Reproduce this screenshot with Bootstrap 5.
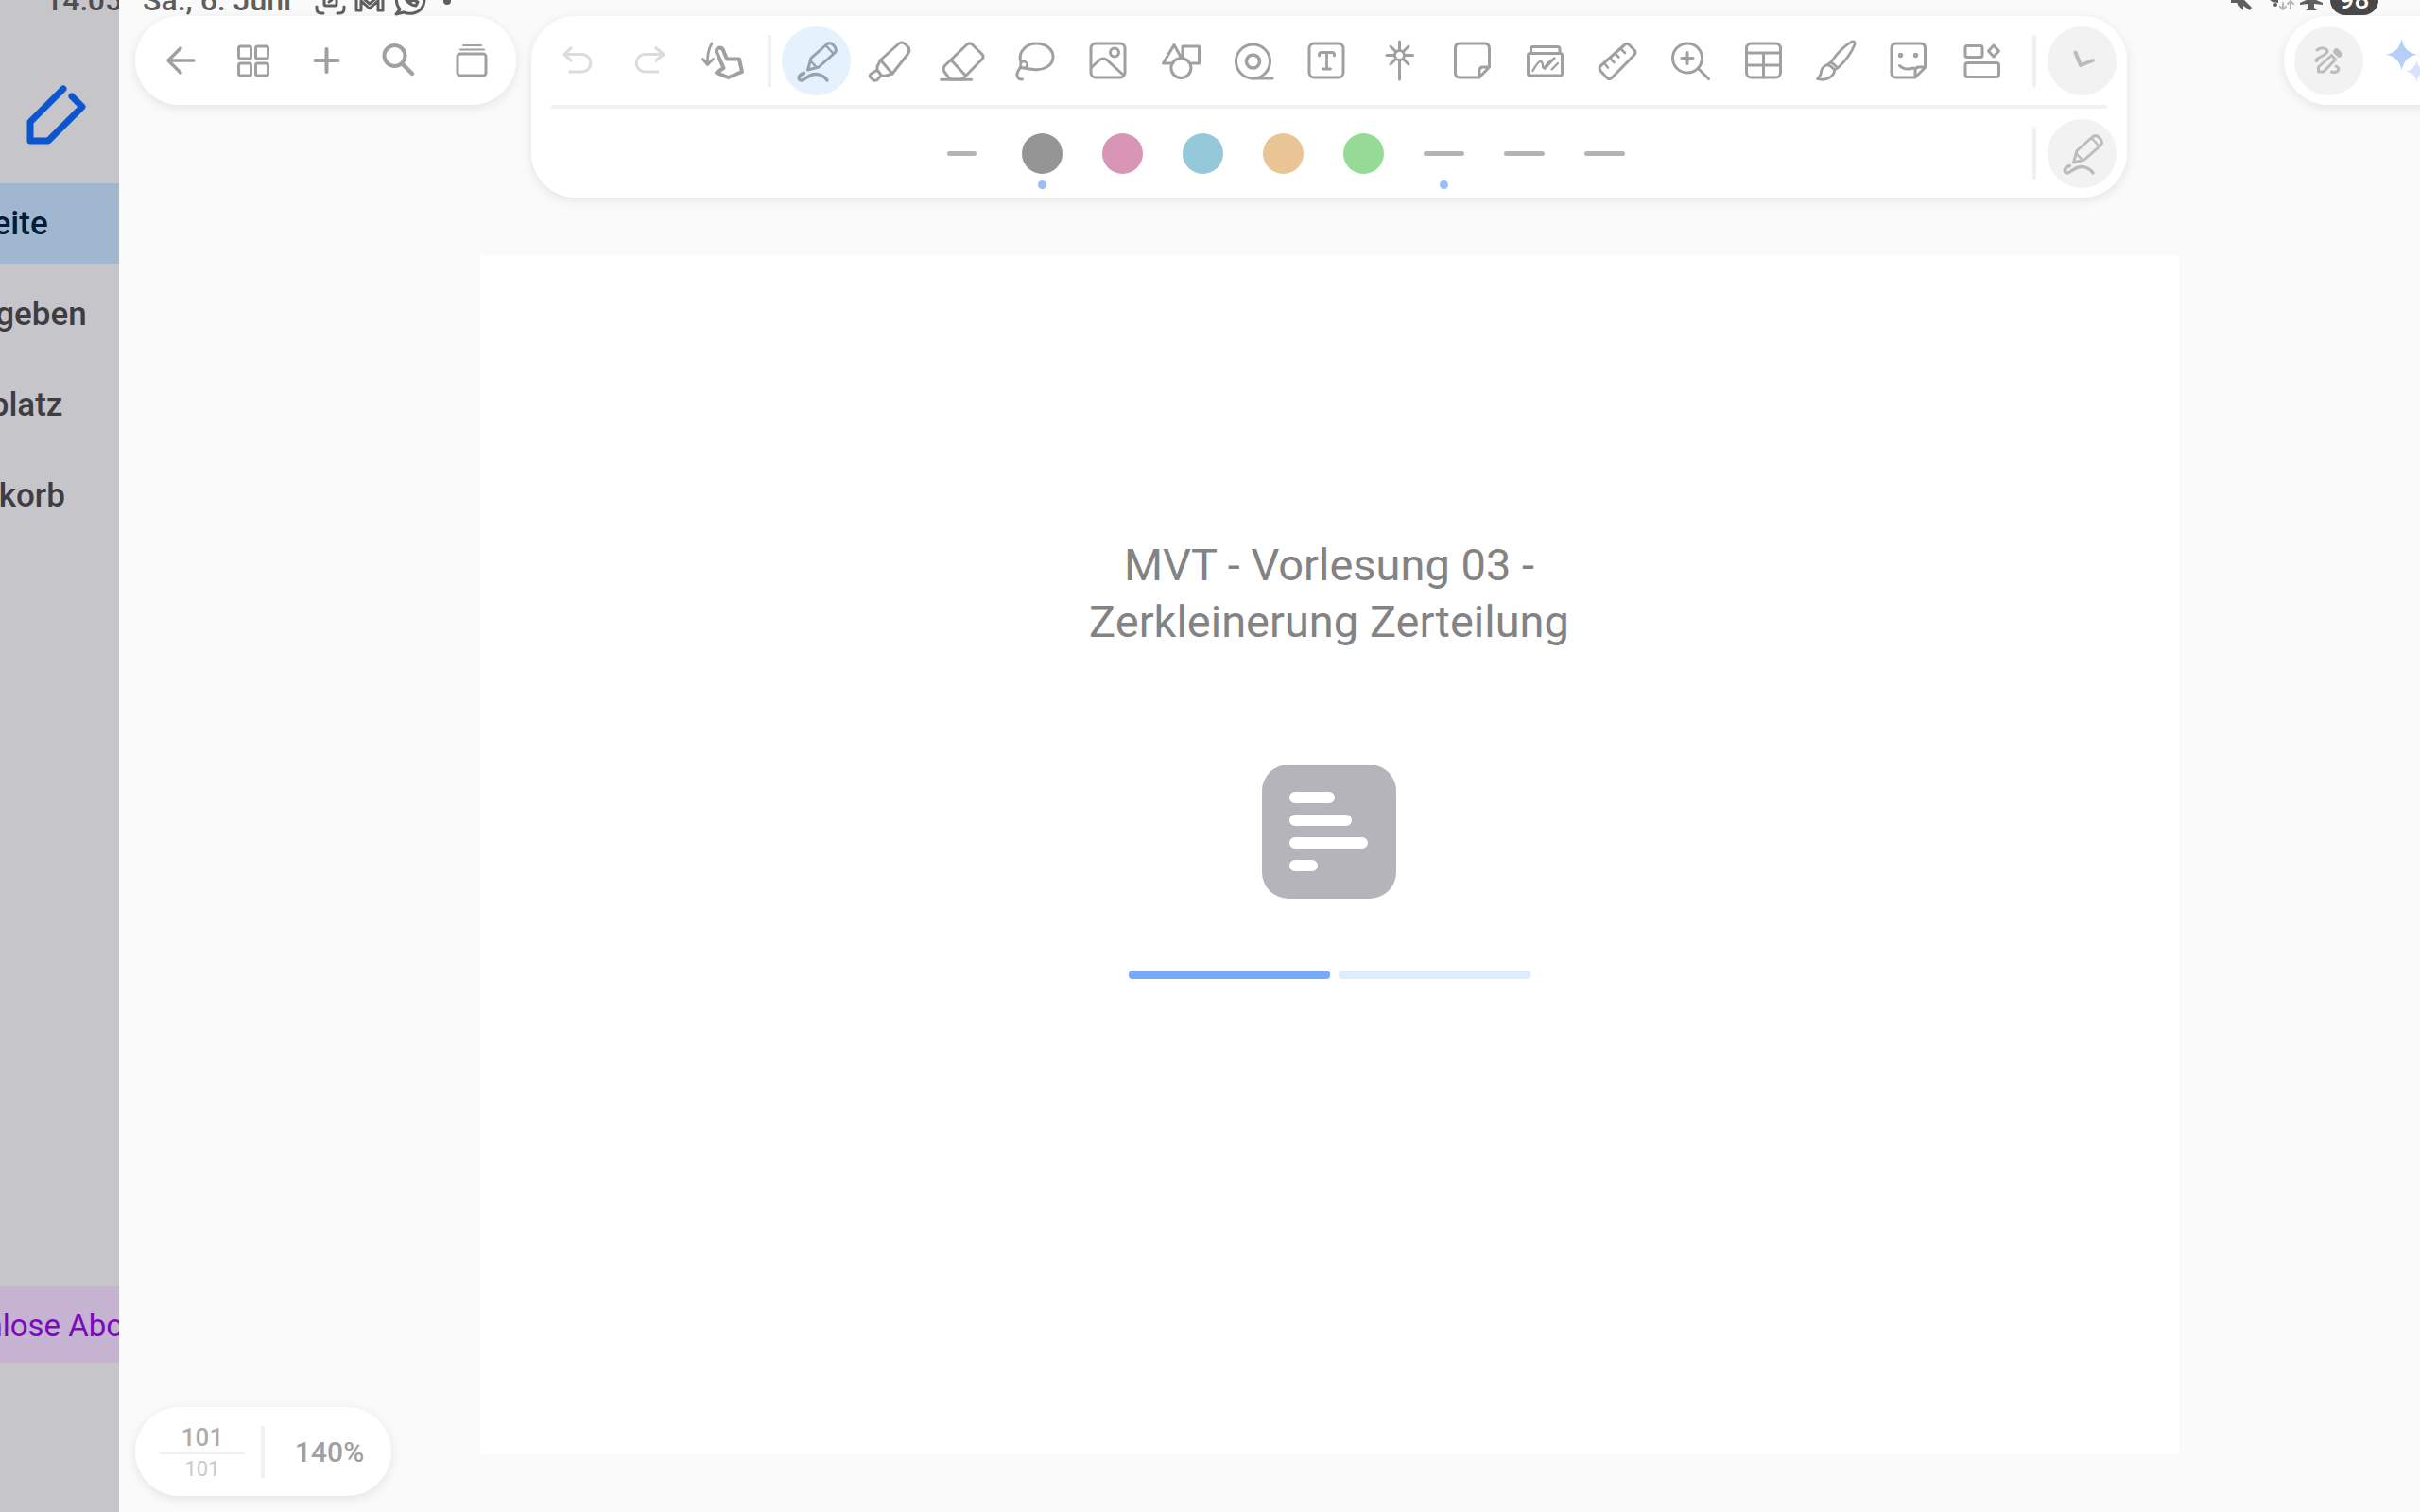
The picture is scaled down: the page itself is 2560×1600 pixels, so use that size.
<!DOCTYPE html>
<html lang="de">
<head>
<meta charset="utf-8">
<meta name="viewport" content="width=device-width, initial-scale=1">
<title>MVT - Vorlesung 03 - Zerkleinerung Zerteilung</title>
<link href="https://cdn.jsdelivr.net/npm/bootstrap@5.3.0/dist/css/bootstrap.min.css" rel="stylesheet">
<script src="https://cdn.jsdelivr.net/npm/bootstrap@5.3.0/dist/js/bootstrap.bundle.min.js" defer></script>
<style>
  body { font-family: Roboto, "Liberation Sans", sans-serif; background: #fafafa; color: #a0a0a0; }
  svg { fill: none; stroke: currentColor; stroke-width: 3; stroke-linecap: round; stroke-linejoin: round; flex: none; overflow: visible; }
  .ico { width: 48px; height: 48px; }

  /* status bar, half scrolled off the top edge */
  .status-strip { height: 32px; margin-top: -16px; line-height: 32px; font-size: 32px; font-weight: 500; color: #5f5f5f; z-index: 5; padding: 0 44px 0 48px; }
  .status-time { width: 78px; color: #4e4d52; margin-right: 25px; }
  .status-date { margin-right: 25px; }
  .battery { background: #484848; color: #fff; border-radius: 16px; width: 51px; font-size: 28px; }

  /* drawer, sliding out to the left */
  .drawer { width: 126px; background: #c5c5ca; flex: none; }
  .drawer-inner { width: 230px; margin-left: -104px; padding-top: 84px; }
  .drawer-logo { width: 76px; height: 76px; margin: 0 0 34px 126px; color: #0b55cf; stroke-width: 7; }
  .drawer-link { height: 85px; margin-bottom: 11px; font-size: 35px; font-weight: 500; color: #3e3d44; text-decoration: none; padding: 2px 0 0 2px; }
  .drawer-link.active { background: #a1b7cf; color: #031c38; }
  .drawer-offer { height: 81px; margin-bottom: 158px; background: #c5b3d1; color: #7a0bb8; font-size: 33px; text-decoration: none; padding: 2px 0 0 4px; }

  /* editor */
  .editor { flex: none; padding: 17px 17px 0; }
  .side-cell { flex: 1 1 0; }
  .float-panel { background: #fff; box-shadow: 0 3px 12px rgba(0, 0, 0, .09); border-radius: 47px; }
  .pill { height: 94px; }
  .nav-pill { padding: 0 9px; }
  .tool { width: 77px; height: 94px; border: 0; background: none; padding: 0; color: #a0a0a0; }
  .tool:disabled { color: #dcdcdc; }
  .disc { width: 73px; height: 73px; border-radius: 50%; display: flex; align-items: center; justify-content: center; }
  .tool .disc { background: #e5f1fd; color: #94a2b1; margin: 0 2px; }
  .round-btn { border: 0; padding: 0; background: #f2f2f2; color: #bcbcbc; flex: none; }
  .vbar { width: 4px; height: 55px; background: #f1f1f1; flex: none; }
  .tool-split { margin: 0 9px; }
  .tool-row { height: 94px; padding: 0 11px 0 10px; }
  .row-split { height: 4px; margin: 0 21px; background: #f2f2f2; }
  .swatch-btn { width: 85px; height: 94px; border: 0; background: none; padding: 0; }
  .swatch { width: 43px; height: 43px; border-radius: 50%; }
  .stroke-line { width: 43px; height: 5px; border-radius: 3px; background: #b3b4b6; }
  .stroke-line.short { width: 31px; }
  .picked::after { content: ""; position: absolute; left: 38px; top: 76px; width: 9px; height: 9px; border-radius: 50%; background: #98bef8; }
  .ai-pill { width: 253px; padding-left: 11px; }

  .sheet { width: 1797px; max-width: 72%; margin: 61px auto; padding-top: 298px; background: #fff; }
  .sheet-title { font-size: 47px; line-height: 60px; color: #838383; width: 520px; font-weight: 400; margin-bottom: 121px; }
  .doc-icon { width: 142px; height: 142px; margin-bottom: 76px; }
  .load-bar { width: 425px; gap: 9px; }
  .load-bar div { height: 9px; border-radius: 4px; }
  .load-done { background: #76a9f9; width: 213px; }
  .load-rest { background: #deedfd; }

  .page-pill { left: 17px; bottom: 17px; padding: 0 29px 0 26px; }
  .page-count { width: 90px; margin-right: 17px; line-height: 24px; padding-top: 3px; }
  .page-now { font-size: 26px; font-weight: 500; color: #acacac; padding-bottom: 4px; border-bottom: 2px solid #efefef; }
  .page-all { font-size: 22px; color: #c9c9c9; padding-top: 4px; }
  .zoom-value { font-size: 30px; font-weight: 500; margin-left: 32px; color: #a0a0a0; }
</style>
</head>
<body class="vh-100 overflow-hidden position-relative">

<svg class="d-none" aria-hidden="true">
  <symbol id="i-back" viewBox="0 0 48 48"><path stroke-width="3.5" d="M38 24H11M24 11L11 24L24 37"/></symbol>
  <symbol id="i-grid" viewBox="0 0 48 48"><rect x="8.500" y="9" width="13" height="13" rx="2"/><rect x="26.500" y="9" width="13" height="13" rx="2"/><rect x="8.500" y="27" width="13" height="13" rx="2"/><rect x="26.500" y="27" width="13" height="13" rx="2"/></symbol>
  <symbol id="i-plus" viewBox="0 0 48 48"><path stroke-width="4" d="M24.500 12V36M12.500 24H36.500"/></symbol>
  <symbol id="i-search" viewBox="0 0 48 48"><circle cx="19.500" cy="19" r="11" stroke-width="4"/><path stroke-width="4.500" d="M29 29L38 38"/></symbol>
  <symbol id="i-stack" viewBox="0 0 48 48"><rect x="9" y="17" width="30" height="23" rx="3"/><path stroke-width="2" d="M12 12.500H37M15 8H34"/></symbol>
  <symbol id="i-undo" viewBox="0 0 48 48"><path d="M18 10L10 17.500L18 25M10 17.500H28.500A9.200 9.200 0 0 1 28.500 36H14.500" stroke-linecap="butt"/></symbol>
  <symbol id="i-redo" viewBox="0 0 48 48"><path d="M29 10L38 17.500L29 25M38 17.500H18.500A9.200 9.200 0 0 0 18.500 36H33" stroke-linecap="butt"/></symbol>
  <symbol id="i-hand" viewBox="0 0 48 48"><path d="M12 6Q7 14 7.500 28M2.500 22.500L7.500 28.500L13.500 22.500" stroke-width="2.800"/><path stroke-width="4" d="M17 15C16.500 10 22 9 24 13L28 22.500L41 22.500L44 36L29.500 42L17 37L24.500 32Z"/></symbol>
  <symbol id="i-pen" viewBox="0 0 48 48"><path d="M14.500 34L18 21.500L35 6.500Q38 4.500 41 7L43.500 10Q45.500 13 43 16L26 31Z"/><path d="M34 8.500L41 16M17.500 24.500L23.500 31" stroke-width="2.500"/><path stroke-width="3.500" d="M10.500 37.500C5 39 3 45 8 45C13 44 18 35.500 28 39.500Q33 41.500 35 45"/></symbol>
  <symbol id="i-marker" viewBox="0 0 48 48"><path d="M14.500 23.500L34 6Q37.500 3.500 41 7L44 10Q46 13.500 43.500 17L27 38Z"/><path d="M14.500 23.500L11 30.500V34L4 38.500Q2.500 40 4 42L6.500 44.500Q8.500 46 11 44.500L15 40L19 40.500L27 38M11 34L15.500 40"/></symbol>
  <symbol id="i-eraser" viewBox="0 0 48 48"><path d="M5.500 29.500L29 7Q32 4.500 35 7.500L45 17.500Q47 20 45 22.500L26 42Q24 44 21 44H13.500Q11 44 9.500 42L5 36Q3 32.500 5.500 29.500ZM12.500 24L27 39.500"/><path d="M1.500 44.300H33.500"/></symbol>
  <symbol id="i-lasso" viewBox="0 0 48 48"><path d="M9 26C5 14 16 6 25.500 6C35 6 43 12 43 20C43 30 32 35 22 33.500L8 31.500"/><circle cx="12" cy="28.500" r="3.500" stroke-width="2.500"/><path d="M9 31Q2 39 7 43.500L10.500 44"/></symbol>
  <symbol id="i-image" viewBox="0 0 48 48"><rect x="6" y="6" width="36" height="36" rx="5"/><circle cx="31" cy="15.500" r="4.500"/><path d="M6.500 31.500L15 23.500Q19 20.500 23 23.500L40.500 39.500"/></symbol>
  <symbol id="i-shapes" viewBox="0 0 48 48"><path d="M16 27H5.500L17 7.500L24 20M26 21V9H43.500V27H36"/><circle cx="24.400" cy="32" r="10.500"/></symbol>
  <symbol id="i-tape" viewBox="0 0 48 48"><circle cx="23.500" cy="25" r="18"/><circle cx="23.500" cy="25" r="7" stroke-width="3.500"/><path d="M23.500 43H44"/></symbol>
  <symbol id="i-text" viewBox="0 0 48 48"><rect x="6" y="6" width="36" height="36" rx="5"/><path stroke-width="2.800" d="M24.500 15.500V33M20.500 33H28.500M16.500 19V18Q16.500 15.500 19 15.500H30Q32.500 15.500 32.500 18V19"/></symbol>
  <symbol id="i-wand" viewBox="0 0 48 48"><circle cx="24.500" cy="18.500" r="5"/><path d="M24.500 4V12M24.500 24V44M11 18.500H19M30 18.500H38.500M15 9L20.500 14.500M34 9L28.500 14.500M15 28L20.500 22.500M34 28L28.500 22.500"/></symbol>
  <symbol id="i-note" viewBox="0 0 48 48"><path d="M11 6H37.500Q42.500 6 42.500 11V31L32 42H11Q6.500 42 6.500 37V11Q6.500 6 11 6ZM32 42V35Q32 31 36 31H42.500"/></symbol>
  <symbol id="i-photos" viewBox="0 0 48 48"><rect x="6.500" y="16.500" width="36" height="23.500" rx="2"/><path d="M9.500 16V12Q9.500 9.500 12 9.500H37.500Q40 9.500 40 12V16"/><path stroke-width="2.300" d="M11.500 35Q17 25 19.500 25T22 30T27 27L34.500 21.500M24 33L34.500 21.500M31.500 33.500L38 27"/></symbol>
  <symbol id="i-ruler" viewBox="0 0 48 48"><path d="M6.500 29.500L31.500 7.500Q34 5 36.500 7.500L42 13Q44 15.500 42 18L18 42.500Q15.500 45 13 42.500L6 35Q4 32 6.500 29.500Z"/><path stroke-width="2.600" d="M11 28L14 31.500M17 22.500L20.500 26M22.500 17.500L25.500 20.500M28 12L32 16"/></symbol>
  <symbol id="i-zoom" viewBox="0 0 48 48"><circle cx="21" cy="21.500" r="15.500"/><path d="M21 15.500V27.500M15 21.500H27M32.500 32.500L43.500 43.500"/></symbol>
  <symbol id="i-table" viewBox="0 0 48 48"><rect x="6.500" y="6" width="36" height="36" rx="5"/><path d="M6.500 16H42.500M6.500 29H42.500M24.500 16V42"/></symbol>
  <symbol id="i-brush" viewBox="0 0 48 48"><path d="M19.500 25Q30 10 41 4Q44.500 3 44 7Q39 20 26.500 31.500M19.500 25L15 28.500Q9 31 8.500 36Q8.500 40 4.500 43.500Q14 46 20 40Q23 37 22.500 34L26.500 31.500M18.500 26Q23 28 25.500 31.500M15 28.500Q20 30 22.500 34" stroke-width="2.800"/></symbol>
  <symbol id="i-sticker" viewBox="0 0 48 48"><path d="M10.500 6H36.500Q41.500 6 41.500 11V31.500L31 42H10.500Q6 42 6 37V11Q6 6 10.500 6ZM31 42V35Q31 31 35 31H41.500M14.500 29.500Q20 35 29 32"/><circle cx="15.500" cy="18.500" r="1.200"/><circle cx="31.500" cy="18.500" r="1.200"/></symbol>
  <symbol id="i-layout" viewBox="0 0 48 48"><rect x="7" y="8.500" width="18" height="12" rx="2"/><path d="M37 8L42.500 14L37 20L31.500 14Z"/><rect x="7" y="26.500" width="35.500" height="15" rx="2.500"/></symbol>
  <symbol id="i-angle" viewBox="0 0 48 48"><path stroke-width="4" d="M16.500 15.500L22 29L35 24"/></symbol>
  <symbol id="i-draw" viewBox="0 0 48 48"><path d="M11 13Q16 9 20.500 12T16 19.500T11 24.500M12.500 36V31L26.500 18.500L30.500 23L18 36ZM31 30Q35.500 32 33 35Q30 37.500 26.500 36"/><path stroke-width="6.500" d="M31.500 14.500L34.500 17.500"/></symbol>
  <symbol id="i-spark" viewBox="0 0 48 48"><path fill="#b5cffa" stroke="none" d="M25.500 1Q28 15.500 42 17.700Q28 20 25.500 34.500Q23 20 9 17.700Q23 15.500 25.500 1Z"/><path fill="#d6e3fb" stroke="none" d="M41.500 24Q43 34 53 35.500Q43 37 41.500 47Q40 37 30 35.500Q40 34 41.500 24Z"/></symbol>
</svg>

<header class="status-strip position-absolute top-0 start-0 w-100 d-flex align-items-start">
  <span class="status-time overflow-hidden flex-shrink-0">14:05</span>
  <span class="status-date flex-shrink-0">Sa., 6. Juni</span>
  <svg width="150" height="32" viewBox="0 0 150 32" aria-hidden="true">
    <path d="M2 23V25Q2 30 7 30H9M31 23V25Q31 30 26 30H24M10 15V20Q10 22 12 22H21Q23 22 23 20V15M15 18L18 16"/>
    <path d="M44 27V8L58 20L72 8V27H67V17L58 25L49 17V27Z"/>
    <path d="M90 26Q84 18 88 10Q94 1 104 3Q115 6 116 16Q115 28 104 30Q99 31 94 29L86 31ZM95 12Q98 21 107 22L109 18L104 16L101 18L98 14"/>
    <circle cx="140" cy="17" r="4" fill="#5f5f5f" stroke="none"/>
  </svg>
  <svg class="ms-auto" width="105" height="32" viewBox="0 0 105 32" aria-hidden="true">
    <path fill="#5f5f5f" stroke="none" d="M0 14H12L22 24L20 27L13 22V27L6 19H0Z"/>
    <path fill="#5f5f5f" stroke="none" d="M41 16L50 14V19L44 18ZM73 19L82 15V4H88V15L97 19V21L88 20V24L91 27H79L82 24V20L73 21Z"/>
    <circle cx="47" cy="21" r="2" fill="#5f5f5f" stroke="none"/>
    <path stroke="#b8b8b8" stroke-width="2" d="M55 19V26M52 23L55 26L58 23M63 25V17M60 20L63 17L66 20"/>
  </svg>
  <span class="battery text-center">98</span>
</header>

<div class="d-flex h-100">
  <aside class="drawer overflow-hidden h-100">
    <nav class="drawer-inner d-flex flex-column h-100">
      <svg class="drawer-logo" viewBox="0 0 76 76" aria-hidden="true"><path d="M45 10L10 45V65H29L65 29L54 18"/></svg>
      <a class="drawer-link active d-flex align-items-center" href="#">Startseite</a>
      <a class="drawer-link d-flex align-items-center" href="#">Freigegeben</a>
      <a class="drawer-link d-flex align-items-center" href="#">Marktplatz</a>
      <a class="drawer-link d-flex align-items-center" href="#">Papierkorb</a>
      <a class="drawer-offer d-flex align-items-center mt-auto text-nowrap" href="#">Kostenlose Abos</a>
    </nav>
  </aside>

  <main class="editor vw-100 h-100 d-flex flex-column position-relative">
    <div class="d-flex align-items-start">
      <div class="side-cell d-flex">
        <div class="float-panel pill nav-pill d-flex">
          <button class="tool" aria-label="Zurück"><svg class="ico"><use href="#i-back"/></svg></button>
          <button class="tool" aria-label="Seitenübersicht"><svg class="ico"><use href="#i-grid"/></svg></button>
          <button class="tool" aria-label="Hinzufügen"><svg class="ico"><use href="#i-plus"/></svg></button>
          <button class="tool" aria-label="Suchen"><svg class="ico"><use href="#i-search"/></svg></button>
          <button class="tool" aria-label="Tabs"><svg class="ico"><use href="#i-stack"/></svg></button>
        </div>
      </div>

      <div class="float-panel">
        <div class="tool-row d-flex align-items-center">
          <button class="tool" disabled aria-label="Rückgängig"><svg class="ico"><use href="#i-undo"/></svg></button>
          <button class="tool" disabled aria-label="Wiederholen"><svg class="ico"><use href="#i-redo"/></svg></button>
          <button class="tool" aria-label="Scrollen"><svg class="ico"><use href="#i-hand"/></svg></button>
          <span class="vbar tool-split"></span>
          <button class="tool" aria-label="Stift"><span class="disc"><svg class="ico"><use href="#i-pen"/></svg></span></button>
          <button class="tool" aria-label="Textmarker"><svg class="ico"><use href="#i-marker"/></svg></button>
          <button class="tool" aria-label="Radierer"><svg class="ico"><use href="#i-eraser"/></svg></button>
          <button class="tool" aria-label="Lasso"><svg class="ico"><use href="#i-lasso"/></svg></button>
          <button class="tool" aria-label="Bild"><svg class="ico"><use href="#i-image"/></svg></button>
          <button class="tool" aria-label="Formen"><svg class="ico"><use href="#i-shapes"/></svg></button>
          <button class="tool" aria-label="Klebeband"><svg class="ico"><use href="#i-tape"/></svg></button>
          <button class="tool" aria-label="Text"><svg class="ico"><use href="#i-text"/></svg></button>
          <button class="tool" aria-label="Laserpointer"><svg class="ico"><use href="#i-wand"/></svg></button>
          <button class="tool" aria-label="Notiz"><svg class="ico"><use href="#i-note"/></svg></button>
          <button class="tool" aria-label="Sammlung"><svg class="ico"><use href="#i-photos"/></svg></button>
          <button class="tool" aria-label="Lineal"><svg class="ico"><use href="#i-ruler"/></svg></button>
          <button class="tool" aria-label="Zoomfenster"><svg class="ico"><use href="#i-zoom"/></svg></button>
          <button class="tool" aria-label="Tabelle"><svg class="ico"><use href="#i-table"/></svg></button>
          <button class="tool" aria-label="Pinsel"><svg class="ico"><use href="#i-brush"/></svg></button>
          <button class="tool" aria-label="Sticker"><svg class="ico"><use href="#i-sticker"/></svg></button>
          <button class="tool me-3" aria-label="Anordnen"><svg class="ico"><use href="#i-layout"/></svg></button>
          <span class="vbar me-2"></span>
          <button class="round-btn disc ms-1" aria-label="Einklappen"><svg class="ico"><use href="#i-angle"/></svg></button>
        </div>
        <div class="row-split"></div>
        <div class="tool-row d-flex align-items-center">
          <div class="flex-fill d-flex justify-content-center pe-2">
            <button class="swatch-btn d-flex align-items-center justify-content-center" aria-label="Linienart"><span class="stroke-line short"></span></button>
            <button class="swatch-btn picked position-relative d-flex align-items-center justify-content-center" aria-label="Schwarz"><span class="swatch" style="background:#959595"></span></button>
            <button class="swatch-btn d-flex align-items-center justify-content-center" aria-label="Pink"><span class="swatch" style="background:#d895b5"></span></button>
            <button class="swatch-btn d-flex align-items-center justify-content-center" aria-label="Blau"><span class="swatch" style="background:#95c9d9"></span></button>
            <button class="swatch-btn d-flex align-items-center justify-content-center" aria-label="Orange"><span class="swatch" style="background:#e9c495"></span></button>
            <button class="swatch-btn d-flex align-items-center justify-content-center" aria-label="Grün"><span class="swatch" style="background:#95da95"></span></button>
            <button class="swatch-btn picked position-relative d-flex align-items-center justify-content-center" aria-label="Dünn"><span class="stroke-line"></span></button>
            <button class="swatch-btn d-flex align-items-center justify-content-center" aria-label="Mittel"><span class="stroke-line"></span></button>
            <button class="swatch-btn d-flex align-items-center justify-content-center" aria-label="Dick"><span class="stroke-line"></span></button>
          </div>
          <span class="vbar me-2"></span>
          <button class="round-btn disc ms-1" aria-label="Stifteinstellungen"><svg class="ico"><use href="#i-pen"/></svg></button>
        </div>
      </div>

      <div class="side-cell d-flex justify-content-end">
        <div class="float-panel pill ai-pill d-flex align-items-center">
          <button class="round-btn disc" aria-label="Nur Stift"><svg class="ico"><use href="#i-draw"/></svg></button>
          <button class="tool" aria-label="KI-Assistent"><svg class="ico"><use href="#i-spark"/></svg></button>
        </div>
      </div>
    </div>

    <section class="sheet flex-fill d-flex flex-column align-items-center">
      <h1 class="sheet-title text-center">MVT - Vorlesung 03 - Zerkleinerung Zerteilung</h1>
      <svg class="doc-icon" viewBox="0 0 142 142" aria-hidden="true">
        <rect width="142" height="142" rx="28" fill="#b6b4bb" stroke="none"/>
        <path stroke="#fff" stroke-width="12" d="M35 35H71M35 59H89M35 83H106M35 107H53"/>
      </svg>
      <div class="load-bar d-flex" role="progressbar" aria-label="Wird geladen" aria-valuenow="50" aria-valuemin="0" aria-valuemax="100">
        <div class="load-done"></div>
        <div class="load-rest flex-fill"></div>
      </div>
    </section>

    <div class="page-pill float-panel pill position-absolute d-flex align-items-center">
      <div class="page-count text-center">
        <div class="page-now">101</div>
        <div class="page-all">101</div>
      </div>
      <span class="vbar"></span>
      <span class="zoom-value">140%</span>
    </div>
  </main>
</div>
</body>
</html>
